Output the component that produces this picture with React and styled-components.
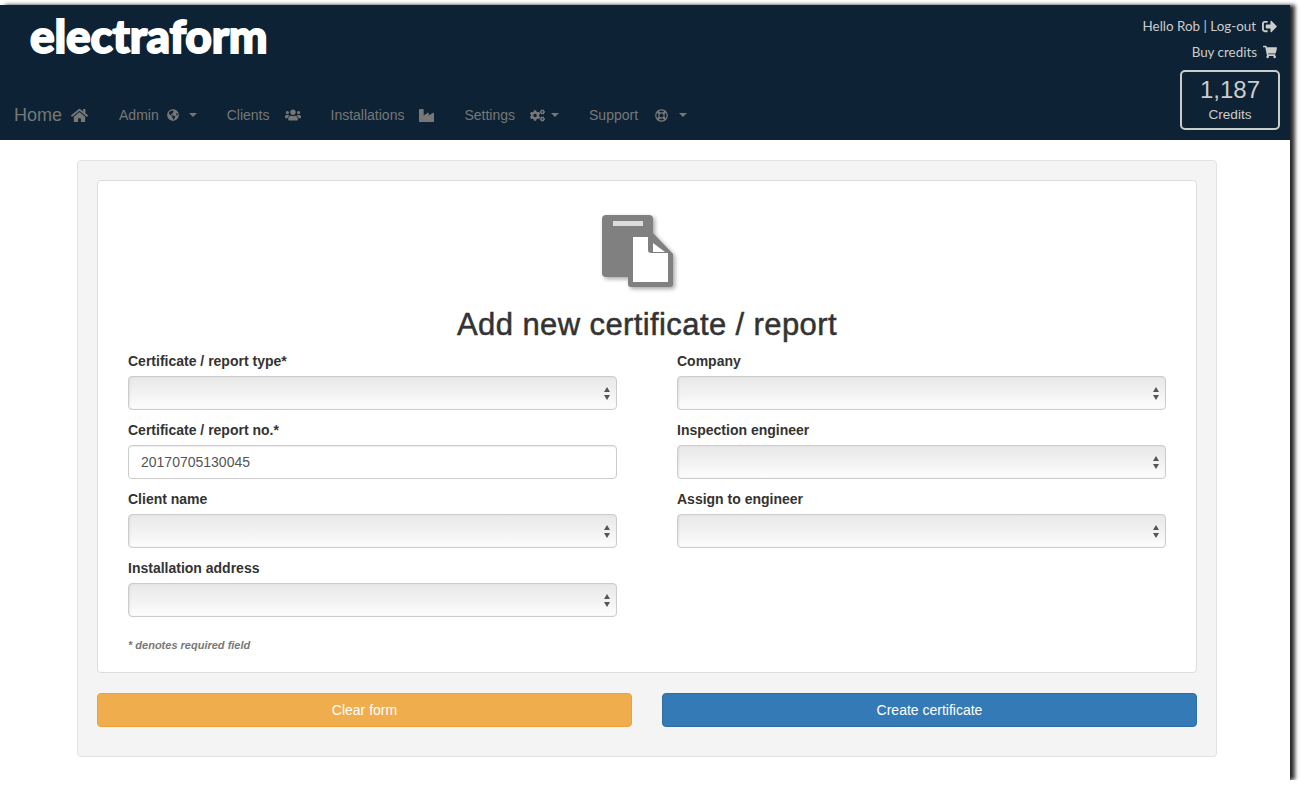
import styled, { createGlobalStyle } from "styled-components";
import {
  FaHome,
  FaGlobeAmericas,
  FaUsers,
  FaIndustry,
  FaCogs,
  FaRegLifeRing,
  FaShoppingCart,
  FaSignOutAlt,
} from "react-icons/fa";

const GlobalStyle = createGlobalStyle`
  html, body {
    margin: 0;
    padding: 0;
    background: #fff;
  }
  * {
    box-sizing: border-box;
  }
`;

const NAV_ITEMS = [
  { label: "Admin", icon: FaGlobeAmericas, iconSize: 12, gap: 8, caretGap: 10 },
  { label: "Clients", icon: FaUsers, iconSize: 16, gap: 15 },
  { label: "Installations", icon: FaIndustry, iconSize: 15, gap: 15 },
  { label: "Settings", icon: FaCogs, iconSize: 15, gap: 15, caretGap: 6 },
  { label: "Support", icon: FaRegLifeRing, iconSize: 13, gap: 17, caretGap: 11 },
];

const LEFT_FIELDS = [
  { label: "Certificate / report type*" },
  { label: "Certificate / report no.*", value: "20170705130045" },
  { label: "Client name" },
  { label: "Installation address" },
];

const RIGHT_FIELDS = [
  { label: "Company" },
  { label: "Inspection engineer" },
  { label: "Assign to engineer" },
];

function FormField({ label, value }) {
  return (
    <Field>
      <FieldLabel>{label}</FieldLabel>
      {value ? (
        <TextInput defaultValue={value} />
      ) : (
        <SelectWrap>
          <Select>
            <option></option>
          </Select>
          <SelectArrows />
        </SelectWrap>
      )}
    </Field>
  );
}

function DocumentIcon() {
  return (
    <DocSvg width="80" height="80" viewBox="0 0 80 80">
      <rect x="2" y="2" width="51" height="62" rx="4" fill="#808080" />
      <rect x="13" y="8" width="30" height="5" fill="#dcdcdc" />
      <path
        d="M28 20 H53 L73 41 V71 a3 3 0 0 1 -3 3 H31 a3 3 0 0 1 -3 -3 Z"
        fill="#808080"
      />
      <path d="M33 24 H48 V37 a3 3 0 0 0 3 3 H68 V69 H33 Z" fill="#fff" />
      <path d="M53 30 V39 H65 Z" fill="#fff" />
    </DocSvg>
  );
}

export default function App() {
  return (
    <>
      <GlobalStyle />
      <Frame>
        <Header>
          <HeaderLeft>
            <Logo>electraform</Logo>
            <Nav>
              <HomeLink>
                Home
                <FaHome size={17} />
              </HomeLink>
              {NAV_ITEMS.map(({ label, icon: Icon, iconSize, gap, caretGap }) => (
                <NavLink key={label} $gap={gap}>
                  {label}
                  <Icon size={iconSize} />
                  {caretGap && <Caret $gap={caretGap - gap} />}
                </NavLink>
              ))}
            </Nav>
          </HeaderLeft>
          <HeaderRight>
            <AccountLine>
              Hello Rob | Log-out
              <FaSignOutAlt size={15} />
            </AccountLine>
            <AccountLine>
              Buy credits
              <FaShoppingCart size={14} />
            </AccountLine>
            <CreditsBox>
              <CreditsCount>1,187</CreditsCount>
              <CreditsLabel>Credits</CreditsLabel>
            </CreditsBox>
          </HeaderRight>
        </Header>

        <Well>
          <Panel>
            <IconRow>
              <DocumentIcon />
            </IconRow>
            <Title>Add new certificate / report</Title>
            <Columns>
              <Column>
                {LEFT_FIELDS.map((f) => (
                  <FormField key={f.label} {...f} />
                ))}
              </Column>
              <Column>
                {RIGHT_FIELDS.map((f) => (
                  <FormField key={f.label} {...f} />
                ))}
              </Column>
            </Columns>
            <Note>* denotes required field</Note>
          </Panel>
          <Buttons>
            <Button $bg="#f0ad4e" $border="#eea236">Clear form</Button>
            <Button $bg="#337ab7" $border="#2e6da4">Create certificate</Button>
          </Buttons>
        </Well>
      </Frame>
    </>
  );
}

const Frame = styled.div`
  width: 1290px;
  height: 775px;
  margin-top: 5px;
  background: #fff;
  font-family: "Liberation Sans", Arial, sans-serif;
  color: #333;
  box-shadow: 5px 0 4px rgba(0, 0, 0, 0.8), 0 2px 3px rgba(0, 0, 0, 0.6);
`;

const Header = styled.header`
  height: 135px;
  background: #0d2335;
  display: flex;
  justify-content: space-between;
`;

const HeaderLeft = styled.div`
  display: flex;
  flex-direction: column;
  justify-content: space-between;
`;

const Logo = styled.div`
  font-family: "Lato", "Liberation Sans", sans-serif;
  font-weight: 900;
  font-size: 46px;
  line-height: 50px;
  letter-spacing: -0.2px;
  color: #fff;
  -webkit-text-stroke: 1.8px #fff;
  padding: 6px 0 0 30px;
`;

const Nav = styled.nav`
  display: flex;
  align-items: center;
  gap: 30px;
  padding: 0 0 15px 14px;
  color: #777;
`;

const HomeLink = styled.a`
  display: flex;
  align-items: center;
  gap: 9px;
  margin-right: 1px;
  font-size: 18px;
  line-height: 20px;
`;

const NavLink = styled.a`
  display: flex;
  align-items: center;
  gap: ${(p) => p.$gap}px;
  font-size: 14px;
  line-height: 20px;
`;

const Caret = styled.span`
  width: 0;
  height: 0;
  margin-left: ${(p) => p.$gap}px;
  border-top: 4px solid #777;
  border-left: 4px solid transparent;
  border-right: 4px solid transparent;
`;

const HeaderRight = styled.div`
  display: flex;
  flex-direction: column;
  align-items: flex-end;
  padding: 11px 10px 0 0;
  color: #ccc;
`;

const AccountLine = styled.div`
  display: flex;
  align-items: center;
  gap: 6px;
  height: 20px;
  margin-bottom: 6px;
  padding-right: 3px;
  font-family: "Lato", "Liberation Sans", sans-serif;
  font-size: 13.4px;
`;

const CreditsBox = styled.div`
  width: 100px;
  height: 60px;
  margin-top: 2px;
  border: 2px solid #ccc;
  border-radius: 5px;
  text-align: center;
`;

const CreditsCount = styled.div`
  font-size: 24px;
  line-height: 34px;
  margin-top: 1px;
`;

const CreditsLabel = styled.div`
  font-size: 13.6px;
  line-height: 16px;
`;

const Well = styled.main`
  width: 1140px;
  height: 597px;
  margin: 20px 0 0 77px;
  padding: 19px;
  background: #f4f4f4;
  border: 1px solid #e3e3e3;
  border-radius: 4px;
`;

const Panel = styled.section`
  height: 493px;
  padding: 0 30px;
  background: #fff;
  border: 1px solid #ddd;
  border-radius: 4px;
`;

const IconRow = styled.div`
  display: flex;
  justify-content: center;
  height: 112px;
  padding: 32px 14px 0 0;
`;

const DocSvg = styled.svg`
  filter: drop-shadow(2px 2px 2px rgba(0, 0, 0, 0.35));
`;

const Title = styled.h1`
  margin: 10px 0 0;
  font-size: 31px;
  font-weight: 400;
  letter-spacing: 0.4px;
  line-height: 44px;
  text-align: center;
  color: #333;
  -webkit-text-stroke: 0.5px #333;
`;

const Columns = styled.div`
  display: grid;
  grid-template-columns: 489px 489px;
  gap: 60px;
  margin-top: 4px;
`;

const Column = styled.div`
  display: flex;
  flex-direction: column;
`;

const Field = styled.div`
  margin-bottom: 10px;
`;

const FieldLabel = styled.label`
  display: block;
  margin-bottom: 5px;
  font-size: 14px;
  font-weight: 700;
  line-height: 20px;
`;

const TextInput = styled.input`
  display: block;
  width: 100%;
  height: 34px;
  padding: 6px 12px;
  font-family: inherit;
  font-size: 14px;
  color: #555;
  background: #fff;
  border: 1px solid #ccc;
  border-radius: 4px;
  box-shadow: inset 0 1px 1px rgba(0, 0, 0, 0.075);
`;

const SelectWrap = styled.div`
  position: relative;
  height: 34px;
`;

const Select = styled.select`
  display: block;
  width: 100%;
  height: 34px;
  appearance: none;
  background: linear-gradient(#e8e8e8, #f2f2f2 50%, #fdfdfd);
  border: 1px solid #ccc;
  border-radius: 4px;
  box-shadow: inset 1px 0 2px rgba(0, 0, 0, 0.08);
`;

const SelectArrows = styled.span`
  position: absolute;
  right: 6px;
  top: 11px;
  width: 7px;
  height: 13px;
  pointer-events: none;

  &::before,
  &::after {
    content: "";
    position: absolute;
    left: 0;
    border-left: 3.5px solid transparent;
    border-right: 3.5px solid transparent;
  }
  &::before {
    top: 0;
    border-bottom: 5px solid #555;
  }
  &::after {
    bottom: 0;
    border-top: 5px solid #555;
  }
`;

const Note = styled.div`
  margin-top: 10px;
  font-size: 11px;
  font-weight: 700;
  font-style: italic;
  line-height: 16px;
  color: #777;
`;

const Buttons = styled.div`
  display: grid;
  grid-template-columns: 535px 535px;
  gap: 30px;
  margin-top: 20px;
`;

const Button = styled.button`
  height: 34px;
  font-family: inherit;
  font-size: 14px;
  color: #fff;
  background: ${(p) => p.$bg};
  border: 1px solid ${(p) => p.$border};
  border-radius: 4px;
`;
